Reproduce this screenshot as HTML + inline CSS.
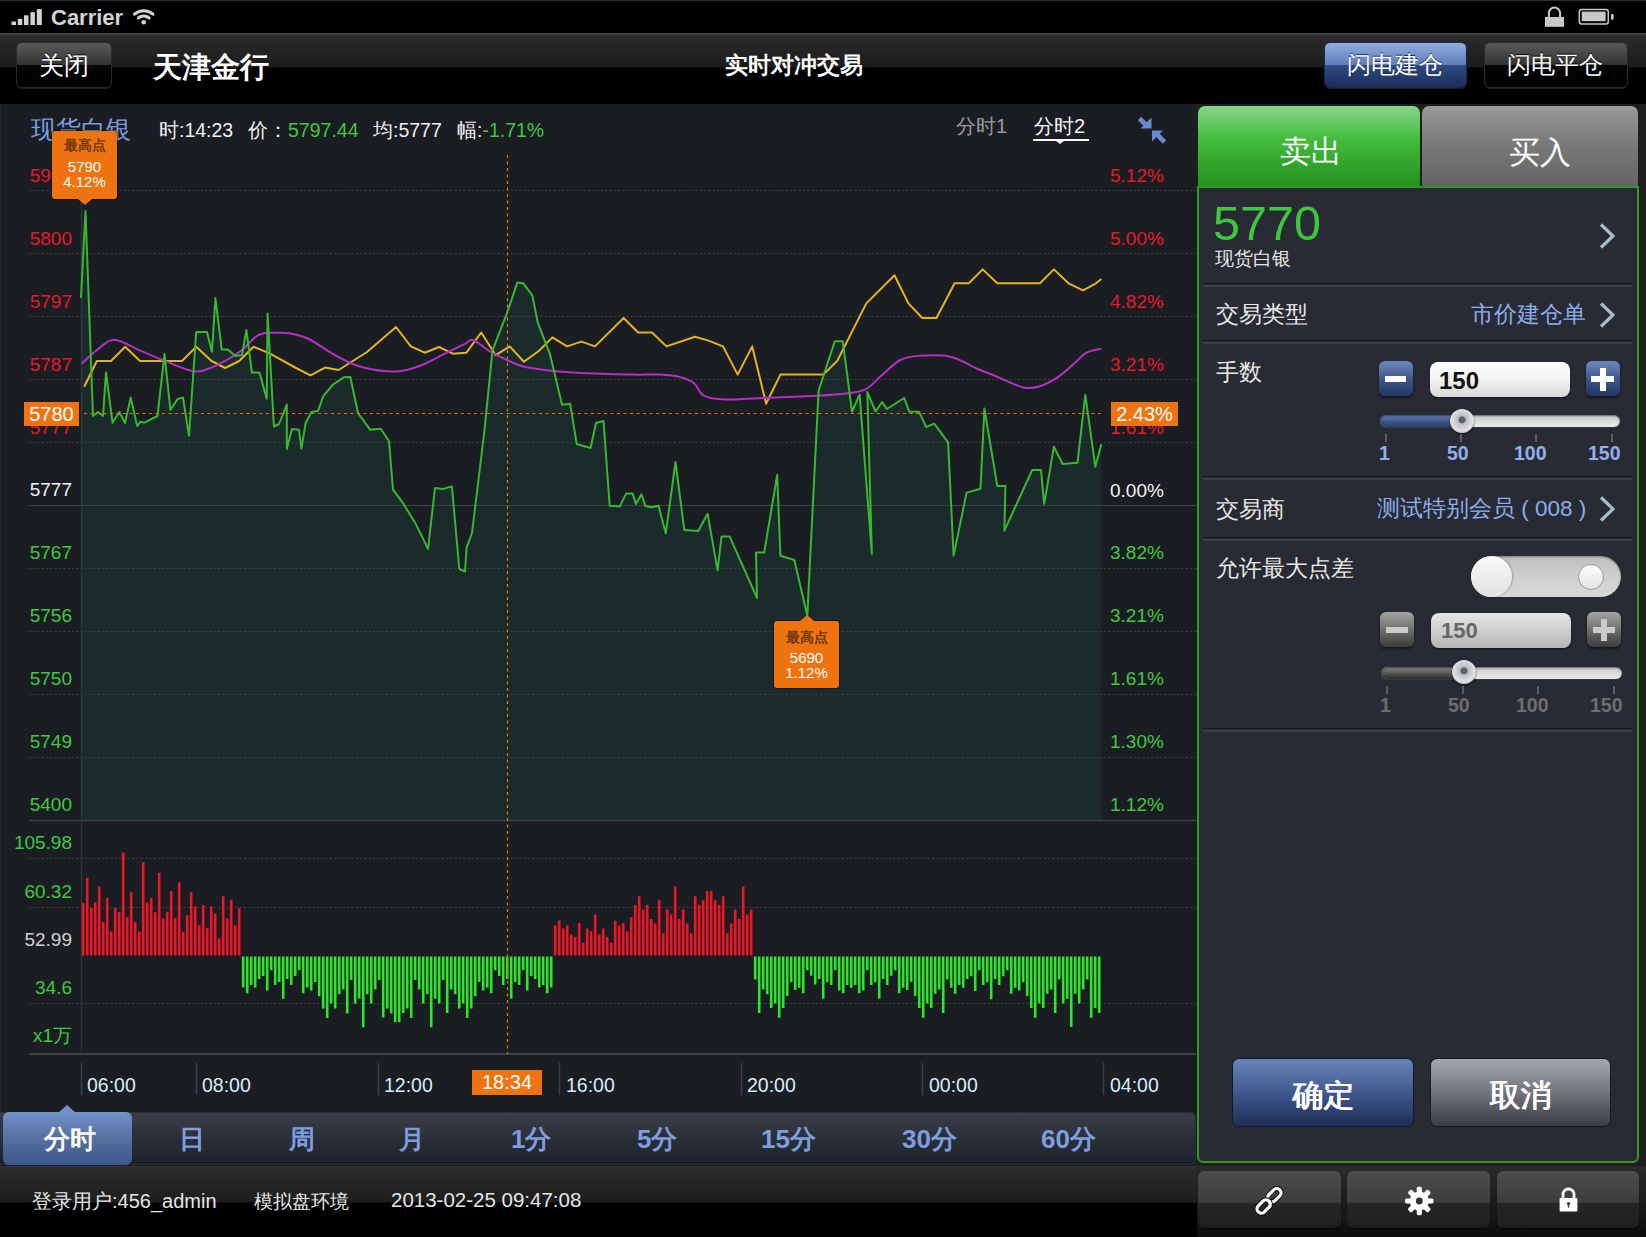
<!DOCTYPE html>
<html><head><meta charset="utf-8">
<style>
*{margin:0;padding:0;box-sizing:border-box}
html,body{width:1646px;height:1237px;overflow:hidden;background:#1a1d21;font-family:"Liberation Sans",sans-serif}
.a{position:absolute;line-height:1;white-space:nowrap}
#status{position:absolute;left:0;top:0;width:1646px;height:33px;background:#000;border-top:1px solid #2e2e2e}
#nav{position:absolute;left:0;top:33px;width:1646px;height:71px;background:linear-gradient(#444 0,#3c3c3c 2px,#2b2b2b 3px,#1b1b1b 34px,#000 35px,#000 71px)}
.nbtn{position:absolute;top:42px;height:46px;border-radius:6px;border:1px solid #444;box-shadow:0 1px 0 rgba(255,255,255,0.12);color:#fff;text-align:center;text-shadow:0 -1px 0 rgba(0,0,0,0.6)}
.blk{background:linear-gradient(#5a5a5a 0,#333 50%,#070707 51%,#000 100%);border-color:#2a2a2a}
.blu{background:linear-gradient(#92aee2 0,#5e7cb8 50%,#2e4a80 51%,#1b2e5c 100%);border-color:#1c2b4a}
#chart{position:absolute;left:0;top:104px;width:1197px;height:1008px;background:#1a1d21;border-left:1px solid #24282c}
.chart{position:absolute;left:0;top:104px}
.lbl{position:absolute;font-size:19px;line-height:1;white-space:nowrap}
.r{color:#e8182a}.g{color:#3ec93e}.w{color:#f2f2f2}
.ra{text-align:right;width:60px;left:12px}
.obox{position:absolute;background:#f07312;color:#fff;text-align:center;line-height:1}
.tip{position:absolute;background:#f07312;border-radius:3px;box-shadow:0 0 0 1px rgba(0,0,0,0.35);text-align:center;color:#fff}
.tip:before{content:"";position:absolute;left:50%;margin-left:-7px;border:7px solid transparent}
.tipd:before{top:100%;border-top-color:#f07312;border-width:6px 7px 0}
.tipu:before{bottom:100%;border-bottom-color:#f07312;border-width:0 7px 6px}
#tabs{position:absolute;left:0;top:1112px;width:1196px;height:53px;border-radius:0 6px 6px 0;background:linear-gradient(#3a3e49,#2c3039 45%,#1e2128);border:1px solid #2c3038;border-left:0}
.tab{position:absolute;top:1126px;font-size:26px;font-weight:bold;color:#7d9ddf;line-height:1;white-space:nowrap}
#footer{position:absolute;left:0;top:1166px;width:1646px;height:71px;background:linear-gradient(#3a3a3a 0,#2c2c2c 1px,#1d1d1d 36px,#000 37px,#000)}
.fbtn{position:absolute;top:1171px;height:57px;border-radius:6px;background:linear-gradient(#4c4c4c,#3d3d3d 55%,#262626 56%,#1e1e1e);box-shadow:0 1px 1px rgba(0,0,0,0.5)}
#panel{position:absolute;left:1197px;top:104px;width:449px;height:1062px;background:#1e1e1e}
#pbody{position:absolute;left:1197px;top:186px;width:442px;height:977px;background:#282b33;border:2px solid #2f9a24;border-top-width:2px;border-radius:0 0 6px 6px}
.ptab{position:absolute;top:106px;height:82px;border-radius:7px 7px 0 0;color:#fff;text-align:center}
.sep{position:absolute;left:1203px;width:429px;height:3.5px;border-top:1.5px solid #16181c;border-bottom:2px solid #3b3f48}
.plbl{position:absolute;left:1216px;font-size:22.5px;color:#e8e8e8;line-height:1;white-space:nowrap}
.pval{position:absolute;font-size:22.5px;color:#8cadea;line-height:1;white-space:nowrap;text-align:right}
.chev{position:absolute;width:17px;height:27px}
.sbtn{position:absolute;width:34px;height:35px;border-radius:6px;box-shadow:0 2px 3px rgba(0,0,0,0.5)}
.sb-blue{background:linear-gradient(#7089bd,#3d5388 55%,#233664)}
.sb-gray{background:linear-gradient(#a3a3a3,#6a6a6a 55%,#3a3a3a)}
.bar{position:absolute;background:#fff}
.inp{position:absolute;height:35px;border-radius:8px;box-shadow:0 1px 2px rgba(0,0,0,0.6)}
.track{position:absolute;height:12px;border-radius:6px;background:linear-gradient(#c9c9c9,#ededed);box-shadow:inset 0 1px 2px rgba(0,0,0,0.5),0 1px 0 rgba(255,255,255,0.08)}
.thumb{position:absolute;width:24px;height:24px;border-radius:50%;background:radial-gradient(circle at 50% 45%,#5e6166 0,#5e6166 3px,#b9bcc1 4px,#dfe1e4 60%,#8d9096 100%);box-shadow:0 1px 2px rgba(0,0,0,0.7)}
.tick{position:absolute;width:1.5px;height:8px;background:#585d66}
.slbl{position:absolute;font-size:19.5px;font-weight:bold;line-height:1;white-space:nowrap}
.bigbtn{position:absolute;top:1059px;height:67px;width:180px;border-radius:6px;color:#fff;text-align:center;font-size:31px;line-height:73px;text-shadow:0.6px 0 0 #fff,-0.3px 0 0 #fff;box-shadow:0 0 0 1px #141a28}
</style></head><body>
<!-- STATUS BAR -->
<div id="status"></div>
<svg style="position:absolute;left:0;top:0" width="170" height="33">
 <rect x="11.5" y="21.5" width="4.5" height="3.5" fill="#d4d4d4"/>
 <rect x="17.8" y="18.8" width="4.5" height="6.2" fill="#d4d4d4"/>
 <rect x="24" y="15.3" width="4.5" height="9.7" fill="#d4d4d4"/>
 <rect x="30.4" y="12.2" width="4.5" height="12.8" fill="#d4d4d4"/>
 <rect x="36.8" y="9.1" width="5" height="15.9" fill="#d4d4d4"/>
 <path d="M134.5 14.2 A14 14 0 0 1 153 14.2" stroke="#d4d4d4" stroke-width="3" fill="none" stroke-linecap="round"/>
 <path d="M138.3 18 A8.8 8.8 0 0 1 149.2 18" stroke="#d4d4d4" stroke-width="3" fill="none" stroke-linecap="round"/>
 <circle cx="143.7" cy="22.3" r="2.3" fill="#d4d4d4"/>
</svg>
<div class="a" style="left:51px;top:6.5px;font-size:22px;font-weight:bold;color:#d4d4d4">Carrier</div>
<svg style="position:absolute;left:1540px;top:0" width="106" height="33">
 <path d="M8.9 17.5 V13.2 A5.6 5.6 0 0 1 20.1 13.2 V17.5" stroke="#c8c8c8" stroke-width="2" fill="none"/>
 <rect x="5" y="17" width="19" height="9.8" fill="#c8c8c8"/>
 <rect x="39.3" y="9.5" width="29" height="14.5" rx="2.5" stroke="#c8c8c8" stroke-width="1.5" fill="none"/>
 <rect x="41.8" y="11.6" width="23.8" height="9.6" fill="#c8c8c8"/>
 <rect x="71" y="14" width="2.6" height="5.8" rx="1" fill="#c8c8c8"/>
</svg>
<!-- NAV BAR -->
<div id="nav"></div>
<div class="nbtn blk" style="left:16px;width:96px"></div>
<div class="a" style="left:39px;top:53px;font-size:25px;color:#fff;text-shadow:0 -1px 0 #000">关闭</div>
<div class="a" style="left:153px;top:53px;font-size:29px;font-weight:bold;color:#fff">天津金行</div>
<div class="a" style="left:725px;top:55px;font-size:22.5px;font-weight:bold;color:#fff">实时对冲交易</div>
<div class="nbtn blu" style="left:1324px;width:143px"></div>
<div class="a" style="left:1347px;top:53px;font-size:24px;color:#fff;text-shadow:0 -1px 0 #1a2a4a">闪电建仓</div>
<div class="nbtn blk" style="left:1484px;width:144px"></div>
<div class="a" style="left:1507px;top:53px;font-size:24px;color:#fff;text-shadow:0 -1px 0 #000">闪电平仓</div>

<!-- CHART -->
<div id="chart"></div>
<svg class="chart" width="1197" height="1008" viewBox="0 104 1197 1008">
<polygon points="81,820 81,298 85.5,211 93,416 98,412 103,416 106,372.5 112.5,422.7 119.3,412 125,423 130.7,397.6 137.2,426 140.5,421.6 144.4,422.7 157.5,416 164.5,354 170.4,410 177.6,399 183,397.6 189,435.8 196.2,332 207,332 212,351.7 215.4,298 221.7,349.6 227.8,349.6 235.5,356 242,355 246.4,330 251.9,372.5 259.5,372.5 266.7,398.7 267.6,313.5 273.9,426.5 279,424 286.8,404.5 286.8,449 292,429 299,429.8 301.4,448.5 305.6,423.3 311.4,412 318,411 323.4,395.8 333,384.5 343.8,377.3 350.3,377 358,413 370.3,429.8 380.7,428.8 389,441 393,489.6 402.7,502.6 415.6,523.6 428,548.9 435,488 443,489 451.9,486.4 459.3,569 465,571.5 466.6,547.7 472,533 484.4,431 492.5,350.3 507,313 517.4,282.4 523.3,283.3 532.3,295.3 537.8,322.8 549.8,353.6 562,404.7 570.2,403.7 576.7,444 590.6,448 596,423 603.5,420.9 609.7,505.7 619.7,506.6 626.2,493.4 632.6,493.4 635.9,504 641.4,494.3 645.6,506.3 652,507.3 658.5,505.7 665.8,533.2 675.5,462 684.3,530 698.2,531 707.6,513.8 717.6,570.4 721.5,536.4 729.6,536.4 757,598 756,552.6 764.2,552.6 777.2,475 780.4,555.8 794.3,560 807.3,615.7 818.6,390.8 834.8,341.3 842.8,341.3 852,411.5 859.6,394.6 871.9,554.2 867.3,392 875.6,411.5 882.2,402 886.8,409 904.2,398 909.3,411.7 919,411.7 926.2,427.2 934.2,423.7 948.1,442.4 953.6,555.6 966.6,492.6 980.5,488.7 984.4,408.5 997.3,486 1005.4,486 1004.4,530.7 1032.2,470 1041,470 1044.2,503.9 1053.9,446.6 1062.6,464 1077.5,462.8 1085.3,394.9 1095.3,466.7 1101.4,444 1101.4,820" fill="#1b2a2b"/>
<line x1="29" y1="190.5" x2="1196" y2="190.5" stroke="#3d424a" stroke-width="1" stroke-dasharray="2,2.3"/>
<line x1="29" y1="253.5" x2="1196" y2="253.5" stroke="#3d424a" stroke-width="1" stroke-dasharray="2,2.3"/>
<line x1="29" y1="316.5" x2="1196" y2="316.5" stroke="#3d424a" stroke-width="1" stroke-dasharray="2,2.3"/>
<line x1="29" y1="379.5" x2="1196" y2="379.5" stroke="#3d424a" stroke-width="1" stroke-dasharray="2,2.3"/>
<line x1="29" y1="442.5" x2="1196" y2="442.5" stroke="#3d424a" stroke-width="1" stroke-dasharray="2,2.3"/>
<line x1="29" y1="568.5" x2="1196" y2="568.5" stroke="#3d424a" stroke-width="1" stroke-dasharray="2,2.3"/>
<line x1="29" y1="631.5" x2="1196" y2="631.5" stroke="#3d424a" stroke-width="1" stroke-dasharray="2,2.3"/>
<line x1="29" y1="694.5" x2="1196" y2="694.5" stroke="#3d424a" stroke-width="1" stroke-dasharray="2,2.3"/>
<line x1="29" y1="757.5" x2="1196" y2="757.5" stroke="#3d424a" stroke-width="1" stroke-dasharray="2,2.3"/>
<line x1="29" y1="505.5" x2="1196" y2="505.5" stroke="#3b424a" stroke-width="1"/>
<line x1="29" y1="820.5" x2="1196" y2="820.5" stroke="#3b424a" stroke-width="1.5"/>
<line x1="29" y1="858.5" x2="1196" y2="858.5" stroke="#3d424a" stroke-width="1" stroke-dasharray="2,2.3"/>
<line x1="29" y1="907.5" x2="1196" y2="907.5" stroke="#3d424a" stroke-width="1" stroke-dasharray="2,2.3"/>
<line x1="29" y1="1003.5" x2="1196" y2="1003.5" stroke="#3d424a" stroke-width="1" stroke-dasharray="2,2.3"/>
<line x1="29" y1="1054" x2="1196" y2="1054" stroke="#3b424a" stroke-width="2"/>
<line x1="81" y1="190" x2="1" y2="190" stroke="none"/>
<line x1="81.5" y1="190" x2="81.5" y2="1054" stroke="#2f353c" stroke-width="1.5"/>
<line x1="81.5" y1="1063" x2="81.5" y2="1095" stroke="#3b424a" stroke-width="1.5"/>
<line x1="196.5" y1="1063" x2="196.5" y2="1095" stroke="#3b424a" stroke-width="1.5"/>
<line x1="378.5" y1="1063" x2="378.5" y2="1095" stroke="#3b424a" stroke-width="1.5"/>
<line x1="559.5" y1="1063" x2="559.5" y2="1095" stroke="#3b424a" stroke-width="1.5"/>
<line x1="741.5" y1="1063" x2="741.5" y2="1095" stroke="#3b424a" stroke-width="1.5"/>
<line x1="922.5" y1="1063" x2="922.5" y2="1095" stroke="#3b424a" stroke-width="1.5"/>
<line x1="1103.5" y1="1063" x2="1103.5" y2="1095" stroke="#3b424a" stroke-width="1.5"/>
<path d="M83.2 955.5V903M87.2 955.5V877.7M91.2 955.5V907.7M95.2 955.5V902.5M99.2 955.5V886.5M103.2 955.5V922M107.2 955.5V897.8M111.2 955.5V931.4M115.2 955.5V907.7M119.2 955.5V912.3M123.2 955.5V852.4M127.2 955.5V917.3M131.2 955.5V892.2M135.2 955.5V922M139.2 955.5V931.4M143.2 955.5V862.2M147.2 955.5V902.5M151.2 955.5V897.8M155.2 955.5V912.3M159.2 955.5V872.8M163.2 955.5V918.5M167.2 955.5V911.8M171.2 955.5V891M175.2 955.5V918.3M179.2 955.5V882.3M183.2 955.5V931.7M187.2 955.5V915.2M191.2 955.5V892.2M195.2 955.5V906.6M199.2 955.5V925.2M203.2 955.5V905M207.2 955.5V928.3M211.2 955.5V906.6M215.2 955.5V913.5M219.2 955.5V938.6M223.2 955.5V896.3M227.2 955.5V918.5M231.2 955.5V899.7M235.2 955.5V925.2M239.2 955.5V908.2M555.2 955.5V925.5M559.2 955.5V920.4M563.2 955.5V928.4M567.2 955.5V925.5M571.2 955.5V934.4M575.2 955.5V937M579.2 955.5V923M583.2 955.5V942.7M587.2 955.5V928.4M591.2 955.5V931.2M595.2 955.5V914.7M599.2 955.5V934.4M603.2 955.5V928.4M607.2 955.5V937M611.2 955.5V942.7M615.2 955.5V920.4M619.2 955.5V925.5M623.2 955.5V923M627.2 955.5V931.2M631.2 955.5V917.2M635.2 955.5V905M639.2 955.5V896.2M643.2 955.5V909.6M647.2 955.5V905M651.2 955.5V919.1M655.2 955.5V923.6M659.2 955.5V900.2M663.2 955.5V933.2M667.2 955.5V909.6M671.2 955.5V914.4M675.2 955.5V886.6M679.2 955.5V919.1M683.2 955.5V909.6M687.2 955.5V923.6M691.2 955.5V933.2M695.2 955.5V896.2M699.2 955.5V905M703.2 955.5V900.2M707.2 955.5V891M711.2 955.5V891M715.2 955.5V900.2M719.2 955.5V905M723.2 955.5V896.2M727.2 955.5V933.2M731.2 955.5V923.6M735.2 955.5V909.6M739.2 955.5V919.1M743.2 955.5V886.6M747.2 955.5V914.4M751.2 955.5V909.6" stroke="#f01426" stroke-width="2.6" fill="none"/>
<path d="M243.2 956.5V987.4M247.2 956.5V993.3M251.2 956.5V985M255.2 956.5V987.4M259.2 956.5V979M263.2 956.5V976M267.2 956.5V990.4M271.2 956.5V970.2M275.2 956.5V985M279.2 956.5V982M283.2 956.5V998.7M287.2 956.5V979M291.2 956.5V985M295.2 956.5V976M299.2 956.5V970.2M303.2 956.5V993.3M307.2 956.5V987.4M311.2 956.5V990.4M315.2 956.5V982M319.2 956.5V996.3M323.2 956.5V1008.6M327.2 956.5V1018M331.2 956.5V1003.6M335.2 956.5V1008.6M339.2 956.5V994.3M343.2 956.5V989.4M347.2 956.5V1013.5M351.2 956.5V980M355.2 956.5V1003.6M359.2 956.5V998.7M363.2 956.5V1027.3M367.2 956.5V994.3M371.2 956.5V1003.6M375.2 956.5V989.4M379.2 956.5V980M383.2 956.5V1017.4M387.2 956.5V1008.6M391.2 956.5V1013.5M395.2 956.5V1022.3M399.2 956.5V1022.3M403.2 956.5V1013M407.2 956.5V1008.6M411.2 956.5V1018M415.2 956.5V980M419.2 956.5V989.4M423.2 956.5V1003.6M427.2 956.5V994.3M431.2 956.5V1027.3M435.2 956.5V998.7M439.2 956.5V1003.6M443.2 956.5V980M447.2 956.5V1013M451.2 956.5V989.4M455.2 956.5V994.3M459.2 956.5V1008.6M463.2 956.5V1003.6M467.2 956.5V1018M471.2 956.5V1008.6M475.2 956.5V996.3M479.2 956.5V982M483.2 956.5V990.4M487.2 956.5V987.4M491.2 956.5V993.3M495.2 956.5V970.2M499.2 956.5V976M503.2 956.5V985M507.2 956.5V979M511.2 956.5V998.7M515.2 956.5V982M519.2 956.5V985M523.2 956.5V970.2M527.2 956.5V990.4M531.2 956.5V976M535.2 956.5V979M539.2 956.5V987.4M543.2 956.5V985M547.2 956.5V993.3M551.2 956.5V987.4M755.2 956.5V979.5M759.2 956.5V1012.9M763.2 956.5V989.4M767.2 956.5V994.3M771.2 956.5V1008M775.2 956.5V1003.6M779.2 956.5V1017.8M783.2 956.5V1008M787.2 956.5V996M791.2 956.5V982.3M795.2 956.5V990M799.2 956.5V987.7M803.2 956.5V993.2M807.2 956.5V970.2M811.2 956.5V975.7M815.2 956.5V984.4M819.2 956.5V979M823.2 956.5V998.7M827.2 956.5V982.3M831.2 956.5V985M835.2 956.5V970.2M839.2 956.5V990.5M843.2 956.5V993.2M847.2 956.5V985M851.2 956.5V987.7M855.2 956.5V985M859.2 956.5V993.2M863.2 956.5V990.5M867.2 956.5V970.2M871.2 956.5V985M875.2 956.5V982.3M879.2 956.5V998.7M883.2 956.5V979M887.2 956.5V985M891.2 956.5V975.7M895.2 956.5V970.2M899.2 956.5V993.2M903.2 956.5V987.7M907.2 956.5V990M911.2 956.5V981.7M915.2 956.5V996M919.2 956.5V1008M923.2 956.5V1017.8M927.2 956.5V1003.6M931.2 956.5V1008M935.2 956.5V993.7M939.2 956.5V989.4M943.2 956.5V1012.9M947.2 956.5V979.5M951.2 956.5V987.7M955.2 956.5V993.7M959.2 956.5V985M963.2 956.5V987.7M967.2 956.5V979M971.2 956.5V976.2M975.2 956.5V991M979.2 956.5V970.2M983.2 956.5V985M987.2 956.5V982.3M991.2 956.5V999.2M995.2 956.5V979M999.2 956.5V985M1003.2 956.5V976.2M1007.2 956.5V970.2M1011.2 956.5V993.7M1015.2 956.5V987.7M1019.2 956.5V990.5M1023.2 956.5V982.3M1027.2 956.5V996M1031.2 956.5V1008M1035.2 956.5V1017.8M1039.2 956.5V1003.6M1043.2 956.5V1008M1047.2 956.5V993.7M1051.2 956.5V989.4M1055.2 956.5V1012.9M1059.2 956.5V979.5M1063.2 956.5V1003.6M1067.2 956.5V998.7M1071.2 956.5V1027.1M1075.2 956.5V993.7M1079.2 956.5V1003.6M1083.2 956.5V989.4M1087.2 956.5V979.5M1091.2 956.5V1017.8M1095.2 956.5V1008M1099.2 956.5V1012.9" stroke="#2ee52e" stroke-width="2.6" fill="none"/>
<polyline points="84.2,386.7 96.8,361 111,361 125.2,346.7 140,361 182,361 196.2,346.7 211.5,361 225.2,368 239.2,361 253.6,346.7 270,353.7 296,368 310.5,375.4 325,367.6 338.6,370 367,352 396,327 410.8,346.3 424.7,352.7 439,347 452.8,353.7 466.4,352.7 481.2,332.5 495.7,355.2 509.7,346.4 523.9,361.7 538.8,351 552.4,337.4 567,346.4 581.5,341.6 595,346.4 623.6,318 638.1,332.5 652,332.5 666.5,346.4 695,336.7 708.5,340.6 723,346.4 737.7,374.6 752.2,346.4 766.1,403.7 780.4,374.6 823.4,374.6 837.3,360.7 866.3,303.4 894.5,275.2 908.4,303.4 922.3,318 936.5,318 954.6,283.3 968.8,283.3 982.7,269.4 997.3,283.3 1040,283.3 1053.9,269.4 1068.5,283.3 1083,290.4 1096,283.3 1101.4,279" fill="none" stroke="#e3b41e" stroke-width="2" stroke-linejoin="round"/>
<path d="M81.5,363.8C84.1,361.5 91.5,354.0 97,350C102.5,346.0 107.0,339.6 114.3,339.7C121.5,339.8 131.8,347.0 140.5,350.7C149.2,354.4 157.8,358.2 166.7,361.6C175.6,365.1 186.7,370.3 194,371.4C201.3,372.5 204.8,370.0 210.4,368C216.0,366.0 222.7,362.3 227.8,359.4C232.9,356.5 236.3,354.5 241,350.7C245.7,346.9 252.2,339.4 256.2,336.5C260.2,333.6 261.9,333.6 265,333C268.1,332.4 270.9,332.8 275,332.8C279.1,332.9 283.8,332.3 289.4,333.3C295.0,334.3 301.2,335.4 308.8,339C316.4,342.6 326.1,350.4 334.7,355C343.3,359.6 350.4,363.9 360.6,366.7C370.8,369.4 385.8,371.8 396,371.5C406.2,371.2 413.9,368.0 422,365C430.1,362.0 437.6,357.2 444.8,353.7C452.0,350.2 460.3,346.2 465,343.9C469.7,341.6 468.7,338.6 473,340C477.3,341.4 485.3,348.7 491,352C496.7,355.3 501.6,357.6 507,360C512.4,362.4 516.3,364.8 523.3,366.5C530.3,368.2 537.1,369.2 549,370.4C560.9,371.6 580.5,372.9 594.5,373.6C608.5,374.3 622.1,374.4 633,374.6C643.9,374.8 652.3,374.2 660,374.6C667.7,375.0 673.7,375.4 679.4,376.9C685.1,378.3 690.0,380.2 694,383.3C698.0,386.4 698.6,392.9 703.7,395.6C708.8,398.3 714.7,399.1 724.7,399.5C734.7,399.9 750.1,398.4 763.6,397.9C777.1,397.4 792.7,396.9 805.6,396.3C818.5,395.7 831.4,395.1 841.2,394C851.1,392.9 858.1,392.7 864.7,389.7C871.3,386.7 875.0,380.9 880.9,376C886.8,371.1 893.8,363.4 900.3,360C906.8,356.6 911.4,356.4 919.7,355.8C928.1,355.2 940.7,354.5 950.4,356.7C960.1,358.9 970.1,365.6 977.9,369C985.7,372.4 989.8,373.7 997.3,376.8C1004.8,379.9 1016.2,385.9 1023.2,387.5C1030.2,389.1 1033.9,388.0 1039.3,386.5C1044.7,385.0 1050.1,382.1 1055.5,378.7C1060.9,375.2 1066.6,370.1 1071.7,365.8C1076.8,361.5 1081.2,355.7 1086.2,352.8C1091.2,349.9 1098.9,349.3 1101.4,348.6" fill="none" stroke="#b62fc7" stroke-width="2"/>
<polyline points="81,298 85.5,211 93,416 98,412 103,416 106,372.5 112.5,422.7 119.3,412 125,423 130.7,397.6 137.2,426 140.5,421.6 144.4,422.7 157.5,416 164.5,354 170.4,410 177.6,399 183,397.6 189,435.8 196.2,332 207,332 212,351.7 215.4,298 221.7,349.6 227.8,349.6 235.5,356 242,355 246.4,330 251.9,372.5 259.5,372.5 266.7,398.7 267.6,313.5 273.9,426.5 279,424 286.8,404.5 286.8,449 292,429 299,429.8 301.4,448.5 305.6,423.3 311.4,412 318,411 323.4,395.8 333,384.5 343.8,377.3 350.3,377 358,413 370.3,429.8 380.7,428.8 389,441 393,489.6 402.7,502.6 415.6,523.6 428,548.9 435,488 443,489 451.9,486.4 459.3,569 465,571.5 466.6,547.7 472,533 484.4,431 492.5,350.3 507,313 517.4,282.4 523.3,283.3 532.3,295.3 537.8,322.8 549.8,353.6 562,404.7 570.2,403.7 576.7,444 590.6,448 596,423 603.5,420.9 609.7,505.7 619.7,506.6 626.2,493.4 632.6,493.4 635.9,504 641.4,494.3 645.6,506.3 652,507.3 658.5,505.7 665.8,533.2 675.5,462 684.3,530 698.2,531 707.6,513.8 717.6,570.4 721.5,536.4 729.6,536.4 757,598 756,552.6 764.2,552.6 777.2,475 780.4,555.8 794.3,560 807.3,615.7 818.6,390.8 834.8,341.3 842.8,341.3 852,411.5 859.6,394.6 871.9,554.2 867.3,392 875.6,411.5 882.2,402 886.8,409 904.2,398 909.3,411.7 919,411.7 926.2,427.2 934.2,423.7 948.1,442.4 953.6,555.6 966.6,492.6 980.5,488.7 984.4,408.5 997.3,486 1005.4,486 1004.4,530.7 1032.2,470 1041,470 1044.2,503.9 1053.9,446.6 1062.6,464 1077.5,462.8 1085.3,394.9 1095.3,466.7 1101.4,444" fill="none" stroke="#38b830" stroke-width="2" stroke-linejoin="round"/>
<line x1="84" y1="413.5" x2="1104" y2="413.5" stroke="#e8720e" stroke-width="1.2" stroke-dasharray="3,3.5"/>
<line x1="507.5" y1="155" x2="507.5" y2="1054" stroke="#e8720e" stroke-width="1.2" stroke-dasharray="3,3.5"/>
</svg>
<!-- chart header -->
<div class="a" style="left:30.5px;top:116.5px;font-size:25px;color:#7b9ee0">现货白银</div>
<div class="a" style="left:159px;top:121px;font-size:19.5px;color:#f0f0f0">时:14:23</div>
<div class="a" style="left:248px;top:121px;font-size:19.5px;color:#f0f0f0">价：<span style="color:#3ec93e">5797.44</span></div>
<div class="a" style="left:373px;top:121px;font-size:19.5px;color:#f0f0f0">均:5777</div>
<div class="a" style="left:457px;top:121px;font-size:19.5px;color:#f0f0f0">幅:<span style="color:#3ec93e">-1.71%</span></div>
<div class="a" style="left:956px;top:116px;font-size:20px;color:#9a9a9a">分时1</div>
<div class="a" style="left:1034px;top:116px;font-size:20px;color:#f5f5f5">分时2</div>
<div style="position:absolute;left:1033px;top:139px;width:56px;height:2px;background:#f5f5f5"></div>
<div style="position:absolute;left:1056px;top:141px;width:0;height:0;border-left:4px solid transparent;border-right:4px solid transparent;border-top:3px solid #f5f5f5"></div>
<svg style="position:absolute;left:1136px;top:114px" width="32" height="32">
 <g fill="#6a8bcc">
 <path d="M3.5 4.5 L11.5 12.5" stroke="#6a8bcc" stroke-width="4.6"/>
 <path d="M15.5 14.5 L4.5 14.5 L15.5 3.5 Z"/>
 <path d="M28.5 28 L20 19.5" stroke="#6a8bcc" stroke-width="4.6"/>
 <path d="M16 16.5 L27 16.5 L16 27.5 Z"/>
 </g>
</svg>
<!-- left axis labels -->
<div class="lbl r ra" style="top:166px">5900</div>
<div class="lbl r ra" style="top:229px">5800</div>
<div class="lbl r ra" style="top:292px">5797</div>
<div class="lbl r ra" style="top:354.5px">5787</div>
<div class="lbl r ra" style="top:418px">5777</div>
<div class="lbl w ra" style="top:480px">5777</div>
<div class="lbl g ra" style="top:543px">5767</div>
<div class="lbl g ra" style="top:606px">5756</div>
<div class="lbl g ra" style="top:669px">5750</div>
<div class="lbl g ra" style="top:732px">5749</div>
<div class="lbl g ra" style="top:794.5px">5400</div>
<div class="obox" style="left:24px;top:402px;width:55px;height:24px;font-size:20px;line-height:24px">5780</div>
<!-- right axis labels -->
<div class="lbl r" style="left:1110px;top:166px">5.12%</div>
<div class="lbl r" style="left:1110px;top:229px">5.00%</div>
<div class="lbl r" style="left:1110px;top:292px">4.82%</div>
<div class="lbl r" style="left:1110px;top:355px">3.21%</div>
<div class="lbl r" style="left:1110px;top:418px">1.61%</div>
<div class="lbl w" style="left:1110px;top:481px">0.00%</div>
<div class="lbl g" style="left:1110px;top:543px">3.82%</div>
<div class="lbl g" style="left:1110px;top:606px">3.21%</div>
<div class="lbl g" style="left:1110px;top:669px">1.61%</div>
<div class="lbl g" style="left:1110px;top:732px">1.30%</div>
<div class="lbl g" style="left:1110px;top:795px">1.12%</div>
<div class="obox" style="left:1111px;top:402px;width:67px;height:24px;font-size:20px;line-height:24px">2.43%</div>
<!-- volume labels -->
<div class="lbl g ra" style="top:833px">105.98</div>
<div class="lbl g ra" style="top:882px">60.32</div>
<div class="lbl ra" style="top:930px;color:#d0d0d0">52.99</div>
<div class="lbl g ra" style="top:978px">34.6</div>
<div class="lbl g ra" style="top:1026px">x1万</div>
<!-- time labels -->
<div class="lbl" style="left:87px;top:1075.5px;font-size:19.5px;color:#d8ecf8">06:00</div>
<div class="lbl" style="left:202px;top:1075.5px;font-size:19.5px;color:#d8ecf8">08:00</div>
<div class="lbl" style="left:384px;top:1075.5px;font-size:19.5px;color:#d8ecf8">12:00</div>
<div class="obox" style="left:472px;top:1070px;width:70px;height:25px;font-size:20px;line-height:25px">18:34</div>
<div class="lbl" style="left:566px;top:1075.5px;font-size:19.5px;color:#d8ecf8">16:00</div>
<div class="lbl" style="left:747px;top:1075.5px;font-size:19.5px;color:#d8ecf8">20:00</div>
<div class="lbl" style="left:929px;top:1075.5px;font-size:19.5px;color:#d8ecf8">00:00</div>
<div class="lbl" style="left:1110px;top:1075.5px;font-size:19.5px;color:#d8ecf8">04:00</div>
<!-- tooltips -->
<div class="tip tipd" style="left:52px;top:131px;width:65px;height:68px">
 <div style="position:absolute;left:0;width:65px;top:7px;font-size:14px;font-weight:bold;line-height:1;color:#73380a">最高点</div>
 <div style="position:absolute;left:0;width:65px;top:28px;font-size:15px;line-height:1">5790</div>
 <div style="position:absolute;left:0;width:65px;top:43px;font-size:15px;line-height:1">4.12%</div>
</div>
<div class="tip tipu" style="left:774px;top:621px;width:65px;height:67px">
 <div style="position:absolute;left:0;width:65px;top:9px;font-size:14px;font-weight:bold;line-height:1;color:#73380a">最高点</div>
 <div style="position:absolute;left:0;width:65px;top:29px;font-size:15px;line-height:1">5690</div>
 <div style="position:absolute;left:0;width:65px;top:44px;font-size:15px;line-height:1">1.12%</div>
</div>

<!-- TABS BAR -->
<div id="tabs"></div>
<div style="position:absolute;left:3px;top:1112px;width:129px;height:53px;border-radius:6px;background:linear-gradient(#7390cb,#56709f 50%,#3d568f);box-shadow:0 1px 0 #1a2030"></div>
<div style="position:absolute;left:58px;top:1105px;width:0;height:0;border-left:9px solid transparent;border-right:9px solid transparent;border-bottom:8px solid #7390cb"></div>
<div class="tab" style="left:44px;color:#fff">分时</div>
<div class="tab" style="left:179px">日</div>
<div class="tab" style="left:289px">周</div>
<div class="tab" style="left:399px">月</div>
<div class="tab" style="left:511px">1分</div>
<div class="tab" style="left:637px">5分</div>
<div class="tab" style="left:761px">15分</div>
<div class="tab" style="left:902px">30分</div>
<div class="tab" style="left:1041px">60分</div>

<!-- FOOTER -->
<div id="footer"></div>
<div class="a" style="left:32px;top:1191px;font-size:20px;color:#e6e6e6">登录用户:456_admin</div>
<div class="a" style="left:254px;top:1192px;font-size:19px;color:#e6e6e6">模拟盘环境</div>
<div class="a" style="left:391px;top:1190px;font-size:20.5px;color:#e6e6e6">2013-02-25 09:47:08</div>
<div style="position:absolute;left:1197px;top:1166px;width:449px;height:71px;background:linear-gradient(#2a2a2a,#1c1c1c 50%,#0c0c0c)"></div>
<div class="fbtn" style="left:1198px;width:143px"></div>
<div class="fbtn" style="left:1347px;width:143px"></div>
<div class="fbtn" style="left:1497px;width:142px"></div>
<svg style="position:absolute;left:1250px;top:1183px" width="38" height="36"><g fill="none"><g transform="translate(24.4,12.2) rotate(-45)"><rect x="-7.6" y="-4.3" width="15.2" height="8.6" rx="4.3" stroke="#111" stroke-width="5.2"/><rect x="-7.6" y="-4.3" width="15.2" height="8.6" rx="4.3" stroke="#fff" stroke-width="3.3"/></g><g transform="translate(13.7,23.5) rotate(-45)"><rect x="-7.6" y="-4.3" width="15.2" height="8.6" rx="4.3" stroke="#111" stroke-width="5.2"/><rect x="-7.6" y="-4.3" width="15.2" height="8.6" rx="4.3" stroke="#fff" stroke-width="3.3"/></g></g></svg>
<svg style="position:absolute;left:1402px;top:1184px" width="34" height="34">
 <g transform="translate(17.3,17)" fill="#fff">
 <circle r="9.6"/>
 <rect x="-2.6" y="-14.2" width="5.2" height="28.4" rx="1.6"/>
 <rect x="-2.6" y="-14.2" width="5.2" height="28.4" rx="1.6" transform="rotate(45)"/>
 <rect x="-2.6" y="-14.2" width="5.2" height="28.4" rx="1.6" transform="rotate(90)"/>
 <rect x="-2.6" y="-14.2" width="5.2" height="28.4" rx="1.6" transform="rotate(135)"/>
 </g>
 <circle cx="17.3" cy="17" r="3.4" fill="#303030"/>
</svg>
<svg style="position:absolute;left:1555px;top:1185px" width="28" height="32">
 <path d="M8 13.5 V9.5 A5.5 5.5 0 0 1 19 9.5 V13.5" stroke="#fff" stroke-width="2.8" fill="none"/>
 <rect x="4.6" y="13" width="17.8" height="13.5" rx="0.8" fill="#fff"/>
 <circle cx="13.5" cy="18.6" r="1.6" fill="#333"/><rect x="12.8" y="18.6" width="1.4" height="4" fill="#333"/>
</svg>

<!-- RIGHT PANEL -->
<div id="panel"></div>
<div id="pbody"></div>
<div class="ptab" style="left:1198px;width:222px;background:linear-gradient(#86d486 0,#44bd3f 40%,#2d9e26 80%,#268f20 100%)"></div>
<div class="ptab" style="left:1422px;width:216px;background:linear-gradient(#9a9a9a 0,#7a7a7a 45%,#636363 100%)"></div>
<div style="position:absolute;left:1197px;top:186px;width:442px;height:2px;background:#2f9a24"></div>
<div class="a" style="left:1280px;top:136px;font-size:31px;color:#fff">卖出</div>
<div class="a" style="left:1509px;top:137px;font-size:31px;color:#fff">买入</div>

<div class="a" style="left:1213px;top:198.5px;font-size:48.5px;color:#3ec73e">5770</div>
<div class="a" style="left:1215px;top:249px;font-size:19px;color:#e6e6e6">现货白银</div>
<svg class="chev" style="left:1598px;top:222px" width="19" height="29"><path d="M3 2.5 L15 14 L3 25.5" stroke="#a6bccb" stroke-width="3.2" fill="none"/></svg>
<div class="sep" style="top:283px"></div>

<div class="plbl" style="top:304px">交易类型</div>
<div class="pval" style="left:1386px;width:200px;top:304px">市价建仓单</div>
<svg class="chev" style="left:1598px;top:301px" width="19" height="29"><path d="M3 2.5 L15 14 L3 25.5" stroke="#a6bccb" stroke-width="3.2" fill="none"/></svg>
<div class="sep" style="top:340px"></div>

<div class="plbl" style="top:362px">手数</div>
<div class="sbtn sb-blue" style="left:1379px;top:361px"></div>
<div class="bar" style="left:1385px;top:376px;width:21px;height:6px"></div>
<div class="inp" style="left:1430px;top:362px;width:140px;background:linear-gradient(#ffffff,#f2f2f2 50%,#d8d8d8)"></div>
<div class="a" style="left:1439px;top:368.5px;font-size:24px;font-weight:bold;color:#111">150</div>
<div class="sbtn sb-blue" style="left:1586px;top:361px"></div>
<div class="bar" style="left:1591px;top:376px;width:23px;height:6px"></div>
<div class="bar" style="left:1599.5px;top:367.5px;width:6px;height:23px"></div>
<div class="track" style="left:1380px;top:415px;width:240px"></div>
<div style="position:absolute;left:1380px;top:415px;width:84px;height:12px;border-radius:6px 0 0 6px;background:linear-gradient(#6a82b8,#3a5288 60%,#2b3d66);box-shadow:inset 0 1px 2px rgba(0,0,0,0.5)"></div>
<div class="thumb" style="left:1450px;top:409px"></div>
<div class="tick" style="left:1385px;top:434px"></div>
<div class="tick" style="left:1460px;top:434px"></div>
<div class="tick" style="left:1535px;top:434px"></div>
<div class="tick" style="left:1611px;top:434px"></div>
<div class="slbl" style="left:1379px;top:444px;color:#8fb0ec">1</div>
<div class="slbl" style="left:1447px;top:444px;color:#8fb0ec">50</div>
<div class="slbl" style="left:1514px;top:444px;color:#8fb0ec">100</div>
<div class="slbl" style="left:1588px;top:444px;color:#8fb0ec">150</div>
<div class="sep" style="top:476px"></div>

<div class="plbl" style="top:499px">交易商</div>
<div class="pval" style="left:1377px;top:498px;text-align:left">测试特别会员 ( 008 )</div>
<svg class="chev" style="left:1598px;top:495px" width="19" height="29"><path d="M3 2.5 L15 14 L3 25.5" stroke="#a6bccb" stroke-width="3.2" fill="none"/></svg>
<div class="sep" style="top:537px"></div>

<div class="plbl" style="top:558px">允许最大点差</div>
<div style="position:absolute;left:1471px;top:556px;width:150px;height:41px;border-radius:21px;background:linear-gradient(#bdbdbd,#cfcfcf 50%,#d8d8d8);box-shadow:inset 0 1px 2px rgba(0,0,0,0.35)"></div>
<div style="position:absolute;left:1471px;top:556px;width:41px;height:41px;border-radius:50%;background:linear-gradient(#fafafa,#ececec 50%,#e2e2e2);box-shadow:1px 0 2px rgba(0,0,0,0.25)"></div>
<div style="position:absolute;left:1578px;top:563.5px;width:26px;height:26px;border-radius:50%;background:linear-gradient(#fdfdfd,#e4e4e4);border:1px solid #9a9a9a"></div>
<div class="sbtn sb-gray" style="left:1380px;top:612px"></div>
<div class="bar" style="left:1386px;top:627px;width:22px;height:6px;background:#cbcbcb"></div>
<div class="inp" style="left:1431px;top:613px;width:140px;background:linear-gradient(#e6e6e6,#cfcfcf 50%,#b4b4b4)"></div>
<div class="a" style="left:1441px;top:620px;font-size:22px;font-weight:bold;color:#666"> 150</div>
<div class="sbtn sb-gray" style="left:1587px;top:612px"></div>
<div class="bar" style="left:1593px;top:627px;width:22px;height:6px;background:#cbcbcb"></div>
<div class="bar" style="left:1601px;top:619px;width:6px;height:22px;background:#cbcbcb"></div>
<div class="track" style="left:1381px;top:667px;width:241px"></div>
<div style="position:absolute;left:1381px;top:667px;width:84px;height:12px;border-radius:6px 0 0 6px;background:linear-gradient(#8a8a8a,#4e4e4e 60%,#2e2e2e);box-shadow:inset 0 1px 2px rgba(0,0,0,0.5)"></div>
<div class="thumb" style="left:1451.5px;top:660px"></div>
<div class="tick" style="left:1386px;top:686px"></div>
<div class="tick" style="left:1462px;top:686px"></div>
<div class="tick" style="left:1537px;top:686px"></div>
<div class="tick" style="left:1613px;top:686px"></div>
<div class="slbl" style="left:1380px;top:696px;color:#6e6e6e">1</div>
<div class="slbl" style="left:1448px;top:696px;color:#6e6e6e">50</div>
<div class="slbl" style="left:1516px;top:696px;color:#6e6e6e">100</div>
<div class="slbl" style="left:1590px;top:696px;color:#6e6e6e">150</div>
<div class="sep" style="top:728px"></div>

<div class="bigbtn" style="left:1233px;background:linear-gradient(#6884b9,#3d5489 55%,#1e2e58)">确定</div>
<div class="bigbtn" style="left:1431px;width:179px;background:linear-gradient(#a5a8b0,#6c6f76 55%,#393c43)">取消</div>
</body></html>
